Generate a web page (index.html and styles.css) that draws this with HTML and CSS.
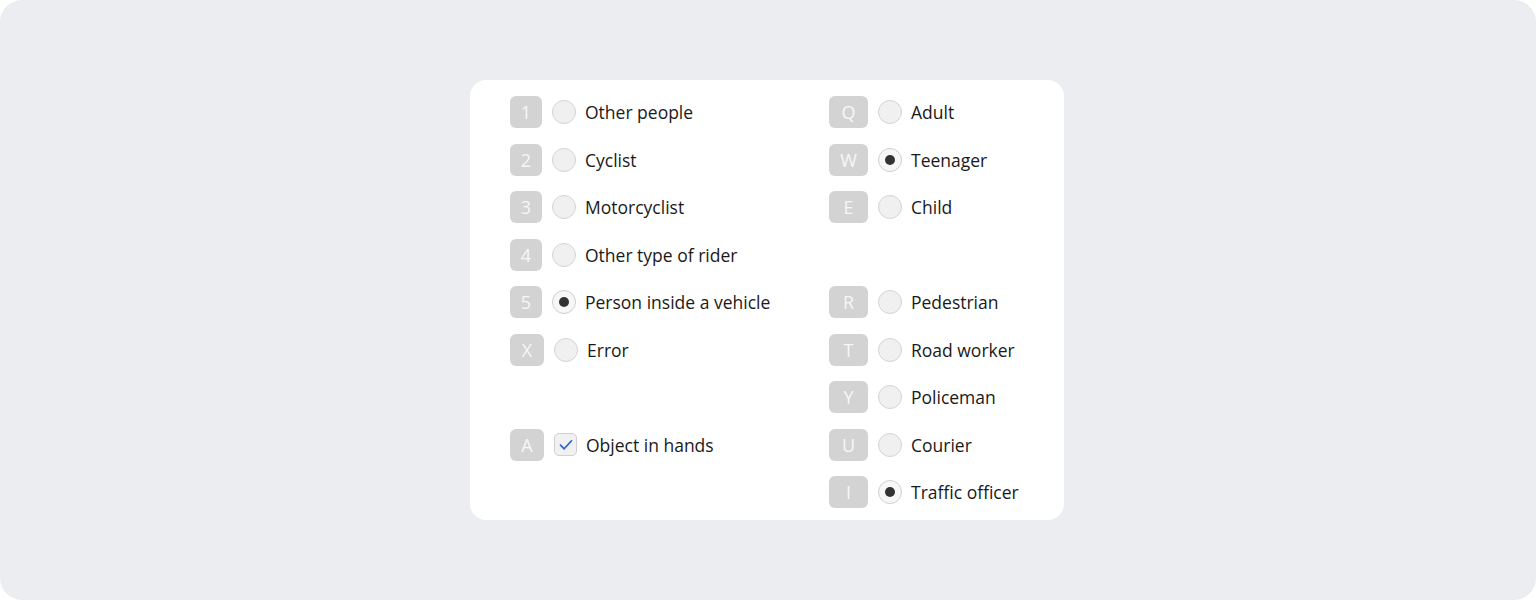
FILE: index.html
```html
<!DOCTYPE html>
<html>
<head>
<meta charset="utf-8">
<link rel="stylesheet" href="styles.css">
</head>
<body>
<div class="frame">
  <div class="card">
    <div class="grid">
      <div class="item"><span class="key">1</span><span class="radio"></span><span class="label">Other people</span></div>
      <div class="item"><span class="key wide">Q</span><span class="radio"></span><span class="label">Adult</span></div>

      <div class="item"><span class="key">2</span><span class="radio"></span><span class="label">Cyclist</span></div>
      <div class="item"><span class="key wide">W</span><span class="radio on"></span><span class="label">Teenager</span></div>

      <div class="item"><span class="key">3</span><span class="radio"></span><span class="label">Motorcyclist</span></div>
      <div class="item"><span class="key wide">E</span><span class="radio"></span><span class="label">Child</span></div>

      <div class="item"><span class="key">4</span><span class="radio"></span><span class="label">Other type of rider</span></div>
      <div class="item empty"></div>

      <div class="item"><span class="key">5</span><span class="radio on"></span><span class="label">Person inside a vehicle</span></div>
      <div class="item"><span class="key wide">R</span><span class="radio"></span><span class="label">Pedestrian</span></div>

      <div class="item"><span class="key mid">X</span><span class="radio"></span><span class="label">Error</span></div>
      <div class="item"><span class="key wide">T</span><span class="radio"></span><span class="label">Road worker</span></div>

      <div class="item empty"></div>
      <div class="item"><span class="key wide">Y</span><span class="radio"></span><span class="label">Policeman</span></div>

      <div class="item"><span class="key mid">A</span><span class="check"><svg width="14" height="12" viewBox="0 0 14 12"><path d="M1.5 6.2 L5.2 9.8 L12.5 1.8" fill="none" stroke="#2a62d4" stroke-width="1.7" stroke-linecap="round" stroke-linejoin="round"/></svg></span><span class="label">Object in hands</span></div>
      <div class="item"><span class="key wide">U</span><span class="radio"></span><span class="label">Courier</span></div>

      <div class="item empty"></div>
      <div class="item"><span class="key wide">I</span><span class="radio on"></span><span class="label">Traffic officer</span></div>
    </div>
  </div>
</div>
</body>
</html>
```

FILE: styles.css
```css
html, body {
  margin: 0;
  padding: 0;
  background: #ffffff;
}
body {
  font-family: "Open Sans", "Noto Sans", sans-serif;
}
.frame {
  width: 1536px;
  height: 600px;
  background: #ecedf1;
  border-radius: 22px;
  display: flex;
  justify-content: flex-start;
  align-items: flex-start;
  box-sizing: border-box;
  padding: 80px 0 0 470px;
}
.card {
  width: 594px;
  height: 440px;
  box-sizing: border-box;
  background: #ffffff;
  border-radius: 16px;
  padding: 16px 40px 12px 40px;
}
.grid {
  display: grid;
  grid-template-columns: 319px auto;
  grid-auto-rows: 32px;
  row-gap: 15.5px;
}
.item {
  display: flex;
  align-items: center;
  height: 32px;
}
.key {
  width: 32px;
  height: 32px;
  border-radius: 6px;
  background: #d3d3d3;
  color: #f7f7f7;
  font-size: 18px;
  display: flex;
  align-items: center;
  justify-content: center;
  flex: none;
}
.key.mid { width: 34px; }
.key.wide { width: 39px; }
.radio {
  width: 24px;
  height: 24px;
  box-sizing: border-box;
  border-radius: 50%;
  border: 1px solid #d4d4d4;
  background: #f0f0f0;
  margin-left: 10px;
  flex: none;
  display: flex;
  align-items: center;
  justify-content: center;
}
.radio.on {
  background: #f7f7f7;
  border-color: #cfcfcf;
}
.radio.on::after {
  content: "";
  width: 10px;
  height: 10px;
  border-radius: 50%;
  background: #333333;
}
.check {
  width: 23px;
  height: 23px;
  box-sizing: border-box;
  border-radius: 5px;
  border: 1px solid #cfcfd4;
  background: #f1f1f4;
  margin-left: 10px;
  flex: none;
  display: flex;
  align-items: center;
  justify-content: center;
}
.label {
  margin-left: 9px;
  font-size: 17.5px;
  color: #1a1a1a;
  white-space: nowrap;
}
```
